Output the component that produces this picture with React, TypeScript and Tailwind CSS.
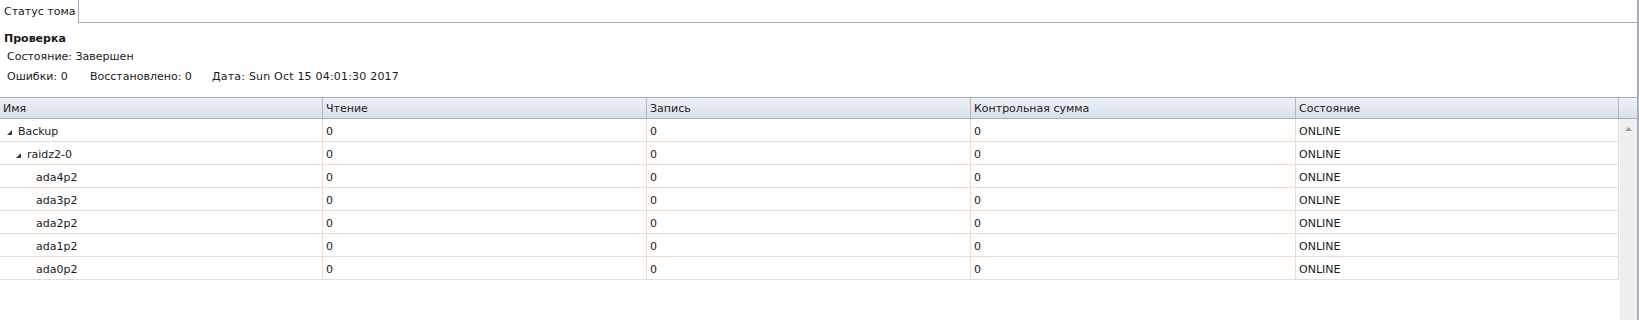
const cols = ["Имя", "Чтение", "Запись", "Контрольная сумма", "Состояние"];
const widths = ["w-[323px]", "w-[324px]", "w-[324px]", "w-[325px]", "w-[323px]"];

const rows = [
  { name: "Backup", level: 0, open: true },
  { name: "raidz2-0", level: 1, open: true },
  { name: "ada4p2", level: 2 },
  { name: "ada3p2", level: 2 },
  { name: "ada2p2", level: 2 },
  { name: "ada1p2", level: 2 },
  { name: "ada0p2", level: 2 },
];

function Arrow() {
  return (
    <svg width="5" height="5" viewBox="0 0 5 5" className="shrink-0">
      <polygon points="5,0 5,5 0,5" fill="#3a3a3a" />
    </svg>
  );
}

function NameCell({ name, level, open }: { name: string; level: number; open?: boolean }) {
  // отступы дерева: 9px на уровень
  const pad = ["pl-[7px]", "pl-[16px]", "pl-[36px]"][level];
  return (
    <div className={`${widths[0]} ${pad} pt-[4px] flex items-center border-r border-[#eddccb]`}>
      {open && <Arrow />}
      <span className={open ? "ml-[6px]" : ""}>{name}</span>
    </div>
  );
}

export default function App() {
  return (
    <div className="w-[1639px] h-[320px] bg-white text-[11px] text-[#1a1a1a] font-['DejaVu_Sans',sans-serif] border-r-2 border-[#aab0ba] overflow-hidden flex flex-col">
      {/* Вкладки */}
      <div className="flex h-[23px] shrink-0">
        <div className="w-[79px] border-r border-[#a9aeb6] pl-[4px] pt-[2px] flex items-center">Статус тома</div>
        <div className="flex-1 border-b border-[#a9aeb6]" />
      </div>

      {/* Проверка */}
      <div className="pt-[8px] h-[74px] shrink-0">
        <div className="h-[17px] pl-[4px] flex items-center font-bold">Проверка</div>
        <div className="h-[18px] pl-[7px] pt-[1px] flex items-center">Состояние: Завершен</div>
        <div className="mt-[2px] h-[18px] pl-[7px] flex items-center">
          <span className="w-[83px]">Ошибки: 0</span>
          <span className="w-[122px]">Восстановлено: 0</span>
          <span className="tracking-[0.2px]">Дата: Sun Oct 15 04:01:30 2017</span>
        </div>
      </div>

      {/* Заголовок таблицы */}
      <div className="flex h-[22px] shrink-0 border-y border-[#a9aeb6] bg-linear-to-b from-[#eef2f7] to-[#d6e0eb] text-[#222]">
        {cols.map((c, i) => (
          <div key={c} className={`${widths[i]} pl-[3px] pt-[2px] flex items-center border-r border-[#b3b8c0]`}>
            {c}
          </div>
        ))}
        <div className="flex-1" />
      </div>

      {/* Строки */}
      <div className="flex flex-1 min-h-0">
        <div className="flex flex-col">
          {rows.map((r) => (
            <div key={r.name} className="flex h-[23px] border-b border-[#eddccb]">
              <NameCell {...r} />
              {["0", "0", "0", "ONLINE"].map((v, i) => (
                <div key={i} className={`${widths[i + 1]} pl-[3px] pt-[4px] flex items-center border-r border-[#eddccb]`}>
                  {v}
                </div>
              ))}
            </div>
          ))}
        </div>
        <div className="flex-1 bg-[#efefef] border-l border-[#f7f7f7] flex justify-center pt-[8px]">
          <svg width="7" height="4" viewBox="0 0 7 4">
            <polygon points="3.5,0 7,4 0,4" fill="#a0a0a0" />
          </svg>
        </div>
      </div>
    </div>
  );
}
